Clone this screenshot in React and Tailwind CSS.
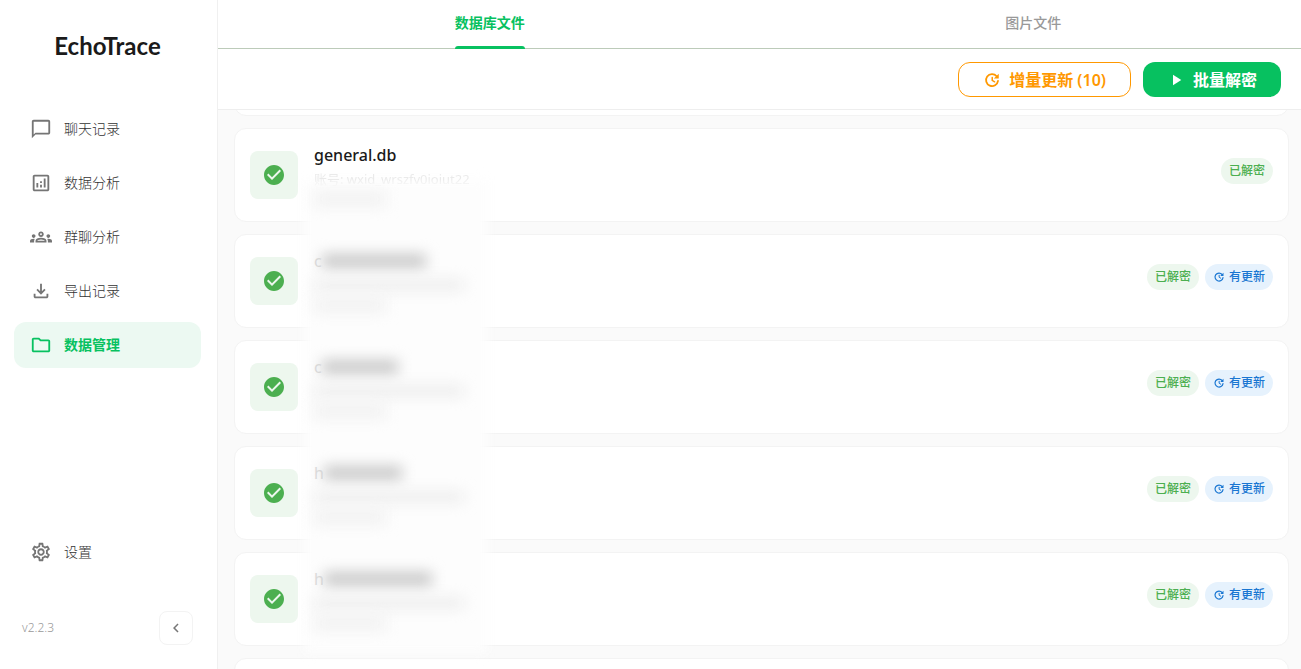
import React from "react";
import {
  MdChatBubbleOutline,
  MdOutlineAnalytics,
  MdOutlineGroups,
  MdOutlineFileDownload,
  MdOutlineFolder,
  MdOutlineSettings,
  MdChevronLeft,
  MdPlayArrow,
  MdCheckCircle,
} from "react-icons/md";

const NAV = [
  { label: "聊天记录", icon: MdChatBubbleOutline },
  { label: "数据分析", icon: MdOutlineAnalytics },
  { label: "群聊分析", icon: MdOutlineGroups },
  { label: "导出记录", icon: MdOutlineFileDownload },
  { label: "数据管理", icon: MdOutlineFolder, active: true },
];

const FILES = [
  { id: 0 },
  { id: 1, name: "general.db", account: "账号: wxid_wrszfv0ioiut22" },
  { id: 2, initial: "c", bar: "w-[104px]", updated: true },
  { id: 3, initial: "c", bar: "w-[76px]", updated: true },
  { id: 4, initial: "h", bar: "w-[78px]", updated: true },
  { id: 5, initial: "h", bar: "w-[108px]", updated: true },
  { id: 6 },
];

function UpdateIcon({ className }) {
  return (
    <svg
      viewBox="0 0 24 24"
      fill="none"
      stroke="currentColor"
      strokeWidth="2.4"
      strokeLinecap="round"
      className={className}
      aria-hidden="true"
    >
      <path d="M18.2 7A8 8 0 1 0 20 13.2" />
      <path d="M12.3 8.5v4l3.2 1.9" strokeWidth="2" />
      <path d="M21 3.6v5.9a.6.6 0 0 1-.6.6h-5.9z" fill="currentColor" stroke="none" />
    </svg>
  );
}

function NavItem({ label, icon: Icon, active }) {
  return (
    <a
      href="#"
      className={`flex h-[46px] items-center gap-3 rounded-xl px-4 text-sm ${
        active ? "bg-[#ecf9f2] font-bold text-[#07c160]" : "font-light text-[#333333]"
      }`}
    >
      <Icon className={`size-[22px] ${active ? "text-[#07c160]" : "text-[#757575]"}`} />
      <span>{label}</span>
    </a>
  );
}

function Badges({ updated }) {
  return (
    <div className="mb-2 flex gap-1.5 text-xs font-medium">
      <span className="flex h-[26px] items-center rounded-full bg-[#edf7ee] px-2 text-[#4caf50]">
        已解密
      </span>
      {updated && (
        <span className="flex h-[26px] items-center gap-1 rounded-full bg-[#e6f2fd] px-2 text-[#1976d2]">
          <UpdateIcon className="size-3" />
          有更新
        </span>
      )}
    </div>
  );
}

function FileCard({ file }) {
  const hasContent = Boolean(file.name || file.initial);
  return (
    <li className="flex h-[94px] shrink-0 items-center gap-4 rounded-xl border border-[#f3f3f3] bg-white px-[15px]">
      {hasContent && (
        <>
          <div className="flex size-12 items-center justify-center rounded-lg bg-[#edf7ee]">
            <MdCheckCircle className="size-6 text-[#4caf50]" />
          </div>
          <div className="relative z-10 flex h-16 flex-1 flex-col font-['Noto_Sans','Noto_Sans_CJK_SC',sans-serif]">
            {file.name && (
              <>
                <h2 className="text-base leading-6 font-medium text-[#1a1a1a]">{file.name}</h2>
                <p className="bg-linear-to-b from-[#eaeaea] from-50% to-transparent to-85% bg-clip-text text-[13px] leading-6 text-transparent">
                  {file.account}
                </p>
              </>
            )}
            {file.initial && (
              <>
                <div className="flex h-6 items-center text-base text-[#dcdcdc]">
                  <span>{file.initial}</span>
                  <span className={`h-3.5 bg-[#c8c8c8] blur-[7px] ${file.bar}`} />
                </div>
                <div className="flex h-6 items-center">
                  <span className="h-3 w-[150px] bg-[#eeeeee] blur-[7px]" />
                </div>
              </>
            )}
            <span className="h-4 w-[72px] bg-[#f2f2f2] blur-[7px]" />
          </div>
          <Badges updated={file.updated} />
        </>
      )}
    </li>
  );
}

export default function App() {
  return (
    <div className="flex h-screen overflow-hidden bg-white font-['Lato','Noto_Sans_CJK_SC',sans-serif] text-[#1a1a1a]">
      <aside className="flex w-[218px] shrink-0 flex-col border-r border-[#f0f0f0] pr-4 pb-6 pl-3.5">
        <h1 className="pt-7 text-center text-2xl leading-9 font-bold">EchoTrace</h1>
        <nav className="mt-[42px] flex flex-1 flex-col gap-2">
          {NAV.map((item) => (
            <NavItem key={item.label} {...item} />
          ))}
        </nav>
        <NavItem label="设置" icon={MdOutlineSettings} />
        <div className="mt-9 flex items-center justify-between px-2">
          <span className="font-['Noto_Sans',sans-serif] text-xs font-light text-[#999999]">v2.2.3</span>
          <button
            aria-label="收起"
            className="flex size-[34px] items-center justify-center rounded-lg border border-[#f3f3f3]"
          >
            <MdChevronLeft className="size-[18px] text-[#777777]" />
          </button>
        </div>
      </aside>

      <main className="flex min-w-0 flex-1 flex-col">
        <div
          role="tablist"
          className="grid h-[49px] shrink-0 grid-cols-2 gap-1 border-b border-[#bccbb9] text-sm font-medium"
        >
          <div className="flex justify-center pl-1">
            <button role="tab" aria-selected="true" className="relative h-[49px] pb-1 font-bold text-[#07c160]">
              数据库文件
              <span className="absolute inset-x-0 bottom-0 h-[3px] rounded-t-[3px] bg-[#07c160]" />
            </button>
          </div>
          <div className="flex justify-center pl-1">
            <button role="tab" aria-selected="false" className="h-[49px] pb-1 text-[#999999]">
              图片文件
            </button>
          </div>
        </div>

        <div className="flex shrink-0 justify-end gap-3 border-b border-[#eeeeee] pt-[13px] pr-5 pb-3 font-['Noto_Sans','Noto_Sans_CJK_SC',sans-serif] font-bold">
          <button className="flex h-[35px] items-center gap-2 rounded-xl border border-[#ff9800] px-6 text-base text-[#ff9800]">
            <UpdateIcon className="size-[18px]" />
            <span>
              增量更新 <span className="font-semibold">(10)</span>
            </span>
          </button>
          <button className="flex h-[35px] items-center gap-2 rounded-xl bg-[#07c160] px-6 text-base text-white">
            <MdPlayArrow className="size-[18px]" />
            批量解密
          </button>
        </div>

        <div className="relative min-h-0 flex-1 overflow-hidden bg-[#fafafa] pr-3 pl-4">
          <ul className="-mt-[88px] flex flex-col gap-3">
            {FILES.map((file) => (
              <FileCard key={file.id} file={file} />
            ))}
          </ul>
          <div className="absolute top-[70px] bottom-4 left-[86px] w-[184px] bg-[#fdfdfd] blur-[6px]" />
        </div>
      </main>
    </div>
  );
}
